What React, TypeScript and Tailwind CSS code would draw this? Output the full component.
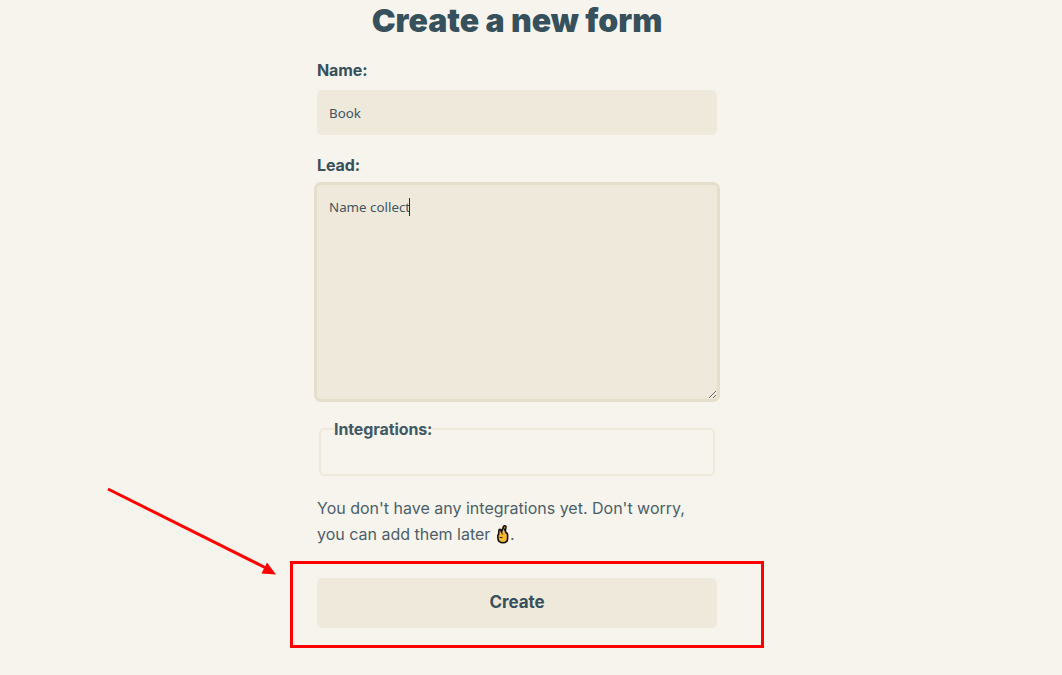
export default function App() {
  return (
    <div className="relative min-h-[675px] h-[675px] overflow-hidden bg-[#f7f4ed] font-['Inter',sans-serif] text-[#37474f]">
      <div className="flex justify-center pr-[28px]">
        <form className="flex w-[400px] flex-col">
          <h1 className="mt-[3px] text-center text-[32px] leading-[36px] font-black whitespace-nowrap text-[#36505c]">Create a new form</h1>
          <label className="mt-[21px] text-[16px] leading-[20px] font-bold tracking-[-0.1px] text-[#36505c]">Name:</label>
          <input
            readOnly
            value="Book"
            className="mt-[10px] h-[45px] w-full rounded-[5px] bg-[#efe9dc] px-3 font-['Noto_Sans',sans-serif] text-[13.33px] text-[#3f5560] outline-none"
          />
          <label className="mt-[20px] text-[16px] leading-[20px] font-bold tracking-[-0.1px] text-[#36505c]">Lead:</label>
          <div className="relative -mx-[3px] mt-[7px]">
            <textarea
              readOnly
              value="Name collect"
              className="block h-[220px] w-[406px] resize-y rounded-[7px] border-[3px] border-[#e3dfcb] bg-[#efe9dc] px-3 py-[12px] font-['Noto_Sans',sans-serif] text-[13.33px] leading-[21px] text-[#3f5560] outline-none"
            />
            <span className="absolute top-[16px] left-[95px] h-[18px] w-px bg-[#1f2d35]" />
          </div>
          <fieldset className="mx-[2px] mt-[17px] h-[57px] rounded-[5px] border-2 border-[#efe9dc] px-[13px]">
            <legend className="text-[16px] leading-[20px] font-bold tracking-[-0.1px] text-[#3f5965]">Integrations:</legend>
          </fieldset>
          <p className="mt-[19px] text-[16px] leading-[26px] text-[#4b5f69]">
            You don't have any integrations yet. Don't worry,
            <br />
            you can add them later{" "}
            <svg viewBox="0 0 15 20" className="inline-block h-[20px] w-[15px] align-[-4px]">
              <path
                d="M3.6 10.4 L3.9 6.4 C4 5 5.8 5 6 6.4 L6.4 8 L8.6 2.6 C9.2 1.2 11.3 1.8 11 3.4 L10.3 6.2 L10.9 8.6 C11.8 8.8 12.6 9.6 12.6 10.8 L12.6 14.6 C12.6 17.2 10.8 18.8 8 18.8 C5.2 18.8 3 17 2.9 14.4 L2.8 11.6 C2.8 11 3.1 10.6 3.6 10.4 Z"
                fill="#f6b92e"
                stroke="#111"
                strokeWidth="1.6"
                strokeLinejoin="round"
              />
              <path d="M8 2.4 L10.9 8.6 M6.4 8 L7.6 10.4 M4.6 13.6 L7.4 13.4" fill="none" stroke="#111" strokeWidth="1" />
            </svg>
            .
          </p>
          <button
            type="button"
            className="mt-[31px] h-[50px] w-full rounded-[5px] bg-[#efe9dc] text-[17px] font-bold tracking-[-0.1px] text-[#36505c]"
          >
            Create
          </button>
        </form>
      </div>
      <div className="absolute top-[561px] left-[290px] h-[87px] w-[474px] border-[3px] border-[#ff0000]" />
      <svg className="absolute top-0 left-0 pointer-events-none" width="1062" height="675" viewBox="0 0 1062 675">
        <line x1="108" y1="489" x2="266" y2="568" stroke="#ff0000" strokeWidth="3" />
        <polygon points="276,574.5 261.5,573.5 267,562.5" fill="#ff0000" />
      </svg>
    </div>
  );
}
